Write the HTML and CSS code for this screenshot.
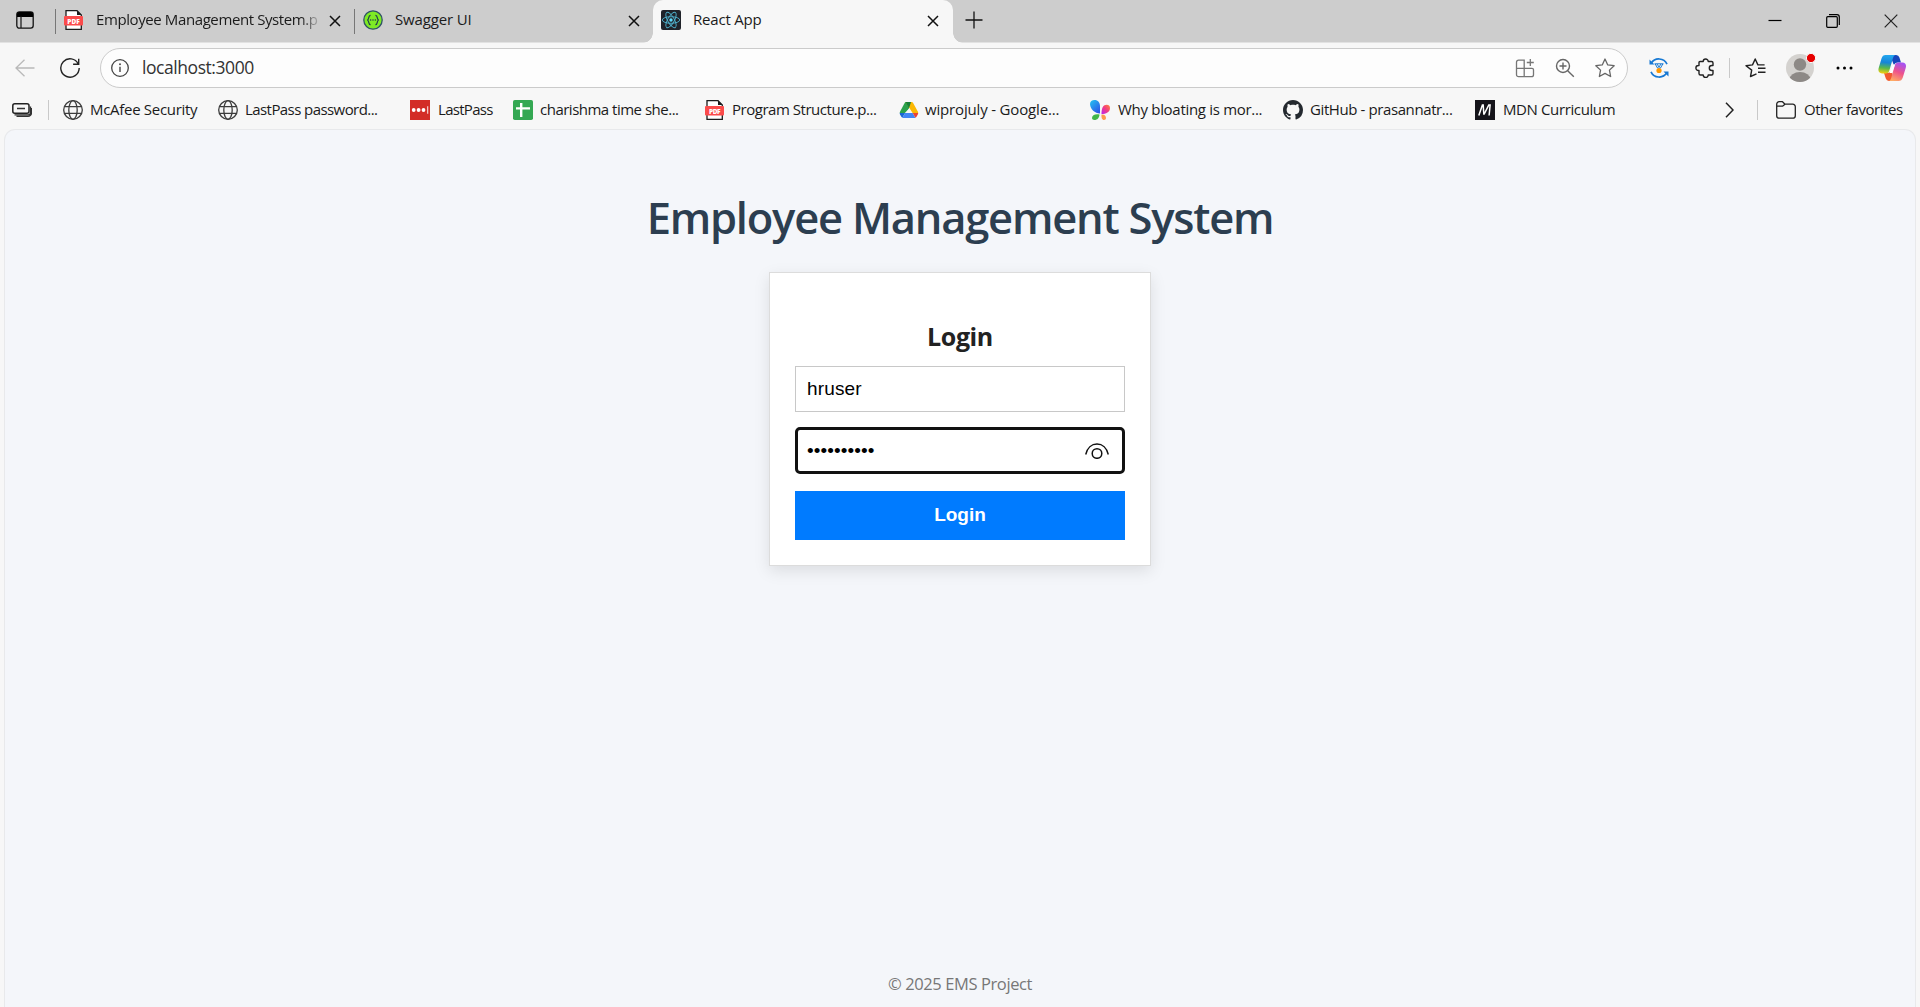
FILE: index.html
```html
<!DOCTYPE html>
<html lang="en">
<head>
<meta charset="utf-8">
<title>React App</title>
<link rel="stylesheet" href="styles.css">
</head>
<body>
<svg class="defs" width="0" height="0" aria-hidden="true">
  <symbol id="pdf" viewBox="0 0 20 20">
    <path d="M2 .7h11l4.300 4.300v14.300H2z" fill="#fff" stroke="#1b1b1b" stroke-width="1.300"/>
    <path d="M13 .5v4.600h4.500z" fill="#1b1b1b"/>
    <rect x="0" y="6" width="19" height="9.600" rx="1" fill="#fb4b4b"/>
    <text x="9.500" y="13.500" text-anchor="middle" class="pdf-text">PDF</text>
  </symbol>
  <symbol id="globe" viewBox="0 0 20 20">
    <g fill="none" stroke="#3c3c3c" stroke-width="1.300"><circle cx="10" cy="10" r="9.300"/><ellipse cx="10" cy="10" rx="4.200" ry="9.300"/><path d="M1.500 6.700h17M1.500 13.300h17"/></g>
  </symbol>
  <symbol id="close" viewBox="0 0 12 12"><path d="M1 1l10 10M11 1L1 11" fill="none" stroke="#111" stroke-width="1.500"/></symbol>
</svg>

<header class="browser">
  <div class="tabstrip">
    <svg class="workspace" width="18" height="18" viewBox="0 0 18 18"><rect x=".8" y=".8" width="16.400" height="16.400" rx="2.600" fill="none" stroke="#111" stroke-width="1.300"/><path d="M1 6V3a2 2 0 0 1 2-2h12a2 2 0 0 1 2 2v3z"/><path d="M5 5v12" stroke="#111" stroke-width="1.200"/></svg>
    <div class="tab divided">
      <svg class="favicon" width="20" height="20"><use href="#pdf"/></svg>
      <span class="tab-title title-ems">Employee Management System.pdf</span>
      <svg class="tab-close" width="12" height="12"><use href="#close"/></svg>
    </div>
    <div class="tab divided">
      <svg class="favicon" width="20" height="20" viewBox="0 0 20 20"><circle cx="10" cy="10" r="9.200" fill="#7eea25" stroke="#2f5366" stroke-width="1.300"/><path d="M7.600 5.300C4.800 5.100 6.600 9.600 4.200 10c2.400.4.6 4.900 3.400 4.700M12.400 5.300c2.800-.2 1 4.300 3.400 4.700-2.400.4-.6 4.900-3.400 4.700" fill="none" stroke="#23404c" stroke-width="1.200"/><path d="M7.600 10h.1M9.950 10h.1M12.300 10h.1" stroke="#23404c" stroke-width="1.400" stroke-linecap="round"/></svg>
      <span class="tab-title title-swagger">Swagger UI</span>
      <svg class="tab-close" width="12" height="12"><use href="#close"/></svg>
    </div>
    <div class="tab active">
      <svg class="favicon" width="20" height="20" viewBox="0 0 20 20"><rect width="20" height="20" rx="2" fill="#20232a"/><g fill="none" stroke="#4fb3cf" stroke-width=".9"><ellipse cx="10" cy="10" rx="8.700" ry="3.300"/><ellipse cx="10" cy="10" rx="8.700" ry="3.300" transform="rotate(60 10 10)"/><ellipse cx="10" cy="10" rx="8.700" ry="3.300" transform="rotate(120 10 10)"/></g><circle cx="10" cy="10" r="1.700" fill="#61dafb"/></svg>
      <span class="tab-title title-react">React App</span>
      <svg class="tab-close" width="12" height="12"><use href="#close"/></svg>
    </div>
    <svg class="new-tab" width="18" height="18" viewBox="0 0 18 18"><path d="M9 .5v17M.5 9h17" stroke="#111" stroke-width="1.300"/></svg>
    <div class="window-controls">
      <svg width="14" height="14" viewBox="0 0 14 14"><path d="M.5 6.500h13" stroke="#000" stroke-width="1.200"/></svg>
      <svg width="14" height="14" viewBox="0 0 14 14"><rect x=".7" y="2.700" width="10.600" height="10.600" rx="1" fill="none" stroke="#000" stroke-width="1.200"/><path d="M3 .7h8a2.300 2.300 0 0 1 2.300 2.300v8" fill="none" stroke="#000" stroke-width="1.200"/></svg>
      <svg width="14" height="14" viewBox="0 0 14 14"><path d="M.7.7l12.600 12.600M13.300.7L.7 13.300" stroke="#222" stroke-width="1.200"/></svg>
    </div>
  </div>

  <div class="toolbar">
    <svg class="back" width="20" height="18" viewBox="0 0 20 18"><path d="M19.500 9H1M9.500.7L1 9l8.500 8.300" fill="none" stroke="#b9b9b9" stroke-width="1.300"/></svg>
    <svg class="reload" width="20" height="20" viewBox="0 0 20 20"><path d="M18.300 6A9.200 9.200 0 1 0 19.200 10M18.700.8v5.500h-5.600" fill="none" stroke="#222" stroke-width="1.400"/></svg>
    <div class="address">
      <svg width="18" height="18" viewBox="0 0 18 18"><circle cx="9" cy="9" r="8.300" fill="none" stroke="#444" stroke-width="1.300"/><path d="M9 7.800v5.200" stroke="#444" stroke-width="1.400"/><circle cx="9" cy="5.300" r=".95" fill="#444"/></svg>
      <span class="url">localhost:3000</span>
      <div class="address-actions">
        <svg width="20" height="20" viewBox="0 0 20 20"><path d="M3.500 2.200h5.700v16.500H3.500a2 2 0 0 1-2-2V4.200a2 2 0 0 1 2-2zM1.500 10.300H17a1.500 1.500 0 0 1 1.500 1.500v4.900a2 2 0 0 1-2 2H9.200M15.300 1v7M11.800 4.500h7" fill="none" stroke="#767676" stroke-width="1.300"/></svg>
        <svg width="20" height="20" viewBox="0 0 20 20"><path d="M12.700 12.700l6.100 6.100M8 4.500v7M4.500 8h7" stroke="#666" stroke-width="1.400"/><circle cx="8" cy="8" r="6.500" fill="none" stroke="#666" stroke-width="1.400"/></svg>
        <svg width="20" height="20" viewBox="0 0 20 20"><path d="M10 1l2.750 5.900 6.400.8-4.700 4.400 1.200 6.400L10 15.400l-5.650 3.100 1.200-6.400L.85 7.700l6.400-.8z" fill="none" stroke="#666" stroke-width="1.300" stroke-linejoin="round"/></svg>
      </div>
    </div>
    <svg class="sync" width="20" height="20" viewBox="0 0 20 20"><path d="M2.200 5.200A9 9 0 0 1 18 6.200M17.800 14.800A9 9 0 0 1 2 13.800" fill="none" stroke="#1678d3" stroke-width="1.700"/><path d="M.5 1.500v5h5zM19.500 18.500v-5h-5z" fill="#1678d3"/><path d="M5.500 5.800h9M6.200 6l2.300 4h3l2.300-4M8 6l2 3 2-3" fill="none" stroke="#1678d3" stroke-width="1"/><circle cx="10" cy="12.500" r="2.600" fill="#ff9800"/></svg>
    <svg class="puzzle" width="20" height="20" viewBox="0 0 20 20"><path d="M5 3.500h3.200a2.500 2.500 0 0 1 5 0h3.300A1.500 1.500 0 0 1 18 5v2.500h-1.200a2.500 2.500 0 0 0 0 5H18V15.500a1.500 1.500 0 0 1-1.500 1.500h-3.300a2.500 2.500 0 0 1-5 0H5.500A1.500 1.500 0 0 1 4 15.500v-3h-.6a2.500 2.500 0 0 1 0-5H4v-3a1 1 0 0 1 1-1z" fill="none" stroke="#222" stroke-width="1.400" stroke-linejoin="round"/></svg>
    <i class="rule"></i>
    <svg class="favorites" width="21" height="20" viewBox="0 0 21 20"><path d="M11.500 15.800l-6 2.700 1.200-6.400L1 7.700l6.500-.8L10.200 1l2.700 5.900h6.700M13 10.300h7.500M13 14.300h7.500" fill="none" stroke="#222" stroke-width="1.400" stroke-linejoin="round"/></svg>
    <svg class="profile" width="30" height="30" viewBox="0 0 30 30"><clipPath id="face"><circle cx="14" cy="16" r="14"/></clipPath><circle cx="14" cy="16" r="14" fill="#d4d2cf"/><g clip-path="url(#face)" fill="#8d8986"><circle cx="14" cy="12.500" r="6.200"/><ellipse cx="14" cy="27.500" rx="10.500" ry="7.500"/></g><circle cx="25" cy="6" r="4.600" fill="#e60000" stroke="#f7f7f7"/></svg>
    <svg class="more" width="17" height="4" viewBox="0 0 17 4"><circle cx="2" cy="2" r="1.500"/><circle cx="8.500" cy="2" r="1.500"/><circle cx="15" cy="2" r="1.500"/></svg>
    <svg class="copilot" width="28" height="28" viewBox="0 0 28 28">
      <defs>
        <linearGradient id="cg1" x1=".4" y1="0" x2=".3" y2="1"><stop stop-color="#23a6ee"/><stop offset=".4" stop-color="#1685d8"/><stop offset=".7" stop-color="#59b84b"/><stop offset="1" stop-color="#f6cf10"/></linearGradient>
        <linearGradient id="cg2" x1=".7" y1="0" x2=".3" y2="1"><stop stop-color="#a452f5"/><stop offset=".5" stop-color="#ee538b"/><stop offset="1" stop-color="#ffac63"/></linearGradient>
      </defs>
      <path d="M12 1h6.200a3.500 3.500 0 0 1 3.200 2.500L23 8.500h-3c-2.300 0-3.500 1-4 3z" fill="#1746bb"/>
      <path d="M16 27H11a3.500 3.500 0 0 1-3.200-2.500L6 19h3.500c2 0 3.200-1 4-3z" fill="#f1592f"/>
      <path d="M7.500 1H17.500c-1.500.3-2 1.500-2.500 3l-3.600 12.200c-.7 2.300-1.400 3.300-3.900 3.300H4C1 19.500-.2 17 .7 14L3.500 4.500C4.300 2 5.500 1 7.500 1z" fill="url(#cg1)"/>
      <path d="M20.500 27H10.500c1.500 0 2.200-1.500 2.700-3l3.500-12.300c.6-2.200 1.800-3.200 4.300-3.200h3.500c3 0 4.100 2.500 3.200 5.500l-2.900 9.500c-.8 2.500-2.100 3.500-4.300 3.500z" fill="url(#cg2)"/>
      <path d="M15 10.500h2l-3 8.500h-2.500z" fill="#fff"/>
    </svg>
  </div>

  <nav class="bookmarks">
    <svg class="hub" width="20" height="14" viewBox="0 0 20 14"><rect x=".8" y=".8" width="16.200" height="9.400" rx="2" fill="none" stroke="#222" stroke-width="1.500"/><path d="M5 5.500h8M2.500 11.800h13.800a2.200 2.200 0 0 0 2.200-2.200V3.500M4.500 13.300H16a3.500 3.500 0 0 0 3.500-3.500V5" fill="none" stroke="#333" stroke-width="1.300"/></svg>
    <i class="rule"></i>
    <ul>
      <li class="b-mcafee"><svg width="20" height="20"><use href="#globe"/></svg><span>McAfee Security</span></li>
      <li class="b-lppass"><svg width="20" height="20"><use href="#globe"/></svg><span>LastPass password...</span></li>
      <li class="b-lp"><svg width="20" height="20" viewBox="0 0 20 20"><path d="M0 0h20v20H0z" fill="#d32d27"/><g fill="#fff"><circle cx="3.700" cy="10" r="1.900"/><circle cx="8.600" cy="10" r="1.900"/><circle cx="13.500" cy="10" r="1.900"/><path d="M17.300 6.300h.9v7.400h-.9z"/></g></svg><span>LastPass</span></li>
      <li class="b-sheet"><svg width="20" height="20" viewBox="0 0 20 20"><rect width="20" height="20" rx="1.800" fill="#34a853"/><path d="M7 3h2.400v14H7zM3 7.200h14v2.300H3z" fill="#fff"/></svg><span>charishma time she...</span></li>
      <li class="b-prog"><svg width="20" height="20"><use href="#pdf"/></svg><span>Program Structure.p...</span></li>
      <li class="b-drive"><svg width="20" height="20" viewBox="0 0 20 20"><path d="M6.500 2h3.500v6.800L5.300 13.500.7 13c0-.5.2-1 .4-1.500L5.800 2.700z" fill="#2ba24c"/><path d="M6.500 2h6.300c.5 0 .9.300 1.200.7L18.800 11.500c.3.500.4 1 .4 1.500h-5.600z" fill="#fbb804"/><path d="M6.500 2H12L10 8.200z" fill="#188038"/><path d="M.7 13h5.400l-2.700 4.700c-.5-.2-.8-.5-1.100-1L1 14.500c-.2-.4-.3-1-.3-1.500z" fill="#1967d2"/><path d="M6.100 13h7.600l2.700 4.700c-.3.200-.7.300-1.100.3H4.600c-.5 0-.9-.1-1.200-.3z" fill="#4285f4"/><path d="M13.700 13h5.500c0 .5-.1 1-.4 1.500l-1.300 2.200c-.2.400-.6.800-1.100 1z" fill="#ea4335"/><path d="M10 8.200L7.200 13h5.600z" fill="#f7f7f7"/></svg><span>wiprojuly - Google...</span></li>
      <li class="b-bloat"><svg width="20" height="20" viewBox="0 0 20 20"><defs><linearGradient id="bf1" x2=".7" y2="1"><stop stop-color="#24c4f0"/><stop offset="1" stop-color="#2d58e8"/></linearGradient><linearGradient id="bf2" x1="1" x2="0" y2="1"><stop stop-color="#ff8a35"/><stop offset=".45" stop-color="#f43f7b"/><stop offset="1" stop-color="#bc20f3"/></linearGradient></defs><path d="M0 4C0 1.500 2 0 4.500 0 8 0 10 2.500 10 6.500V13.500C5 13.500 0 9 0 4z" fill="url(#bf1)"/><path d="M20 8c0-2-1.400-3.200-3.300-3.200-3.500 0-5.200 3-5.200 9.200C16 14 20 12 20 8z" fill="url(#bf2)"/><path d="M9.500 14.500C5 13.500 2 15.500 2 18c0 1.300 1 2 2.400 2 3 0 4.800-2.200 5.100-5.500z" fill="#42b549"/><path d="M11.500 14.500c3-.3 4.500 1.500 4.500 3.500 0 1.200-.8 2-2 2-2 0-2.800-2.500-2.500-5.500z" fill="#ff9a50"/></svg><span>Why bloating is mor...</span></li>
      <li class="b-git"><svg width="20" height="20" viewBox="0 0 16 16"><path fill="#24292f" d="M8 0C3.580 0 0 3.580 0 8c0 3.540 2.290 6.530 5.470 7.590.4.070.55-.17.55-.38 0-.19-.01-.82-.01-1.490-2.010.37-2.530-.49-2.690-.94-.09-.23-.48-.94-.82-1.130-.28-.15-.68-.52-.01-.53.63-.01 1.080.58 1.230.82.72 1.210 1.870.87 2.330.66.07-.52.28-.87.51-1.070-1.780-.2-3.640-.89-3.640-3.950 0-.87.31-1.590.82-2.150-.08-.2-.36-1.020.08-2.120 0 0 .67-.21 2.200.82.64-.18 1.320-.27 2-.27s1.360.09 2 .27c1.530-1.040 2.200-.82 2.200-.82.44 1.100.16 1.920.08 2.120.51.56.82 1.270.82 2.150 0 3.070-1.870 3.750-3.650 3.950.29.25.54.73.54 1.480 0 1.070-.01 1.930-.01 2.200 0 .21.15.46.55.38A8.010 8.010 0 0 0 16 8c0-4.420-3.580-8-8-8z"/></svg><span>GitHub - prasannatr...</span></li>
      <li class="b-mdn"><svg width="20" height="20" viewBox="0 0 20 20"><path d="M0 0h20v20H0z" fill="#15141a"/><path d="M3.800 15.500L7.400 5h.8l.6 9h.4L13.800 5h1.300l-1 10.500" fill="none" stroke="#fff" stroke-width="1.500"/></svg><span>MDN Curriculum</span></li>
    </ul>
    <svg class="overflow" width="9" height="16" viewBox="0 0 9 16"><path d="M1 .7L8 8l-7 7.300" fill="none" stroke="#222" stroke-width="1.500"/></svg>
    <i class="rule"></i>
    <svg class="folder" width="20" height="18" viewBox="0 0 20 18"><path d="M.7 3.200A2.500 2.500 0 0 1 3.200.7h3.300L9 3.200h7.800a2.500 2.500 0 0 1 2.500 2.500v9a2.500 2.500 0 0 1-2.500 2.500H3.200a2.500 2.500 0 0 1-2.500-2.500zM.7 5.200h5.800L9 3.200" fill="none" stroke="#222" stroke-width="1.300" stroke-linejoin="round"/></svg>
    <span class="other">Other favorites</span>
  </nav>
</header>

<main class="page">
  <h1>Employee Management System</h1>
  <form class="card">
    <h2>Login</h2>
    <div class="field">hruser</div>
    <div class="field focused">
      <span>••••••••••</span>
      <svg width="24" height="16" viewBox="0 0 24 16"><path d="M.7 11.500C2.200 5 6.700 1 12 1s9.800 4 11.300 10.500" fill="none" stroke="#111" stroke-width="1.400"/><circle cx="12" cy="10.500" r="4.800" fill="none" stroke="#111" stroke-width="1.500"/></svg>
    </div>
    <button type="button">Login</button>
  </form>
  <footer>© 2025 EMS Project</footer>
</main>
</body>
</html>
```
FILE: styles.css
```css
* { box-sizing: border-box; }

body {
  margin: 0;
  height: 1007px;
  display: flex;
  flex-direction: column;
  overflow: hidden;
  background: #f7f7f7;
  color: #1b1b1b;
  font: 15px/20px "Open Sans", "Noto Sans", sans-serif;
}

svg { display: block; flex: none; }
.defs { position: absolute; }
.pdf-text { font: 800 6.5px "Open Sans", sans-serif; fill: #fff; }

/* Tab strip */
.tabstrip {
  display: flex;
  height: 43px;
  background: #cdcdcd;
  border-bottom: 1px solid #e2e2e2;
}
.workspace { margin: 11px 21px 0 16px; }
.tab {
  position: relative;
  display: flex;
  align-items: flex-start;
  width: 299px;
  height: 42px;
  padding: 10px 13px 0 9px;
}
.tab.divided::before {
  content: "";
  position: absolute;
  left: 0;
  top: 9px;
  width: 1px;
  height: 25px;
  background: #777;
}
.tab-title {
  flex: 1;
  margin-left: 12px;
  overflow: hidden;
  line-height: 18px;
  height: 20px;
  white-space: nowrap;
}
.title-ems {
  margin-right: 11px;
  letter-spacing: -.4px;
  -webkit-mask-image: linear-gradient(90deg, #000 205px, transparent 226px);
  mask-image: linear-gradient(90deg, #000 205px, transparent 226px);
}
.title-swagger { letter-spacing: -.15px; }
.title-react { letter-spacing: -.2px; }
.tab-close { margin-top: 5px; }
.tab.active {
  width: 300px;
  height: 43px;
  padding-left: 8px;
  padding-right: 14px;
  background: #f7f7f7;
  border-radius: 10px 10px 0 0;
}
.tab.active::before,
.tab.active::after {
  content: "";
  position: absolute;
  bottom: 0;
  width: 10px;
  height: 10px;
}
.tab.active::before { left: -10px; background: radial-gradient(circle at 0 0, transparent 9.500px, #f7f7f7 10px); }
.tab.active::after { right: -10px; background: radial-gradient(circle at 100% 0, transparent 9.500px, #f7f7f7 10px); }
.new-tab { margin: 11px 0 0 12px; }
.window-controls { display: flex; gap: 44px; margin: 14px 22px 0 auto; }

/* Toolbar */
.toolbar {
  display: flex;
  align-items: center;
  height: 50px;
}
.back { margin-left: 15px; }
.reload { margin-left: 25px; }
.address {
  display: flex;
  align-items: center;
  width: 1528px;
  height: 40px;
  margin-left: 20px;
  padding: 0 12px 0 10px;
  background: #fdfdfd;
  border: 1px solid #cbcbcb;
  border-radius: 20px;
}
.url { margin-left: 13px; padding-bottom: 2px; font-size: 17.500px; letter-spacing: -.44px; color: #333; }
.address-actions { display: flex; gap: 20px; margin-left: auto; }
.sync { margin-left: 21px; }
.puzzle { margin-left: 26px; }
.rule { flex: none; width: 1px; height: 20px; background: #c9c9c9; }
.toolbar .rule { margin-left: 14px; }
.favorites { margin-left: 15px; }
.profile { margin: -2px 0 0 20px; }
.more { margin-left: 20px; }
.copilot { margin-left: 25px; }

/* Bookmarks bar */
.bookmarks {
  display: flex;
  align-items: center;
  height: 36px;
  padding-bottom: 2px;
  white-space: nowrap;
}
.hub { margin: 0 16px 0 12px; }
.bookmarks ul {
  display: flex;
  width: 1657px;
  margin: 0 0 0 14px;
  padding: 0;
  list-style: none;
}
.bookmarks span { height: 20px; line-height: 18px; }
.bookmarks li { display: flex; flex: none; gap: 7px; width: 192px; }
.bookmarks .b-mcafee { width: 155px; letter-spacing: -.3px; }
.bookmarks .b-lppass { letter-spacing: -.57px; }
.bookmarks .b-lp { width: 103px; gap: 8px; letter-spacing: -.7px; }
.bookmarks .b-sheet { letter-spacing: -.5px; }
.bookmarks .b-prog { width: 194px; letter-spacing: -.47px; }
.bookmarks .b-drive { width: 191px; gap: 6px; letter-spacing: -.17px; }
.bookmarks .b-bloat { width: 193px; gap: 8px; letter-spacing: -.3px; }
.bookmarks .b-git { letter-spacing: -.4px; }
.bookmarks .b-mdn { width: 150px; gap: 8px; letter-spacing: -.38px; }
.bookmarks .overflow { margin: 0 23px 0 5px; }
.folder { margin: 0 8px 0 18px; }
.other { letter-spacing: -.45px; }

/* Page */
.page {
  flex: 1;
  display: flex;
  flex-direction: column;
  align-items: center;
  margin: 0 4px;
  padding-top: 58px;
  background: #f4f6fa;
  border: 1px solid #e8e9eb;
  border-bottom: 0;
  border-radius: 11px 11px 0 0;
}
h1 {
  margin: 0 0 24px;
  color: #2c3e50;
  font-size: 43.500px;
  line-height: 60px;
  font-weight: 600;
  letter-spacing: -1.220px;
}
.card {
  display: flex;
  flex-direction: column;
  width: 382px;
  height: 294px;
  padding: 48px 25px 24px;
  background: #fff;
  border: 1px solid #dcdcdc;
  box-shadow: 0 5px 15px rgba(0, 0, 0, .1);
}
h2 {
  margin: 0 0 14px;
  color: #222;
  font-size: 25px;
  line-height: 31px;
  font-weight: 700;
  letter-spacing: -.4px;
  text-align: center;
}
.field {
  display: flex;
  align-items: center;
  height: 46px;
  padding: 0 11px;
  border: 1px solid #c8c8c8;
  color: #000;
  font: 19px/24px "Liberation Sans", Arial, sans-serif;
  letter-spacing: .15px;
}
.focused {
  justify-content: space-between;
  height: 47px;
  margin: 15px 0 17px;
  padding: 0 13px 0 9px;
  border: 3px solid #111;
  border-radius: 5px;
}
.focused span { letter-spacing: .1px; }
button {
  flex: none;
  height: 49px;
  padding: 0 0 2px;
  border: 0;
  background: #007bff;
  color: #fff;
  font: 700 19px "Liberation Sans", Arial, sans-serif;
}
footer {
  margin-top: auto;
  padding-bottom: 11px;
  color: #777;
  font-size: 16.500px;
  line-height: 24px;
  letter-spacing: -.4px;
}
```
